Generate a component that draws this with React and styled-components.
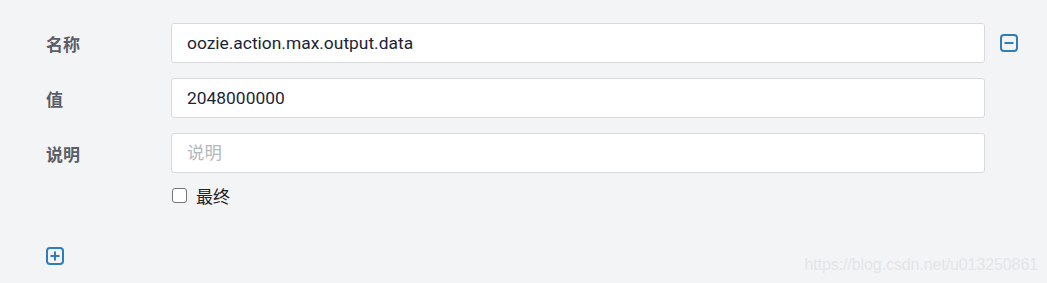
import React from "react";
import styled, { createGlobalStyle } from "styled-components";

const Global = createGlobalStyle`
  html, body { margin: 0; padding: 0; background: #f3f4f6; }
  body { font-family: Roboto, "Noto Sans CJK SC", sans-serif; }
`;

const Page = styled.div`
  position: relative;
  width: 1047px;
  height: 283px;
  box-sizing: border-box;
  padding: 23px 0 0 46px;
  background: #f3f4f6;
`;

const Row = styled.div`
  display: grid;
  grid-template-columns: 125px 814px 34px;
  align-items: center;
  margin-bottom: ${(p) => p.$mb ?? 15}px;
`;

const Label = styled.label`
  font-family: Roboto, "Noto Sans CJK SC", sans-serif;
  font-weight: 700;
  font-size: 17px;
  color: #5a5e66;
`;

const Input = styled.input`
  box-sizing: border-box;
  width: 814px;
  height: 40px;
  border: 1px solid #d9dadc;
  border-radius: 3px;
  background: #fff;
  padding: 0 15px;
  font-family: Roboto, "Noto Sans CJK SC", sans-serif;
  font-size: 17.4px;
  color: #1b2536;
  outline: none;
  &::placeholder { color: #b4b7bc; }
`;

const IconBtn = styled.span`
  display: inline-flex;
  width: 18px;
  height: 18px;
  margin-left: ${(p) => p.$ml ?? 0}px;
`;

const CheckRow = styled.div`
  display: flex;
  align-items: center;
  margin-left: 126px;
  margin-top: 14px;
  height: 17px;
  gap: 9px;
`;

const Box = styled.span`
  box-sizing: border-box;
  width: 15px;
  height: 15px;
  border: 1px solid #767676;
  border-radius: 3px;
  background: #fff;
`;

const CheckLabel = styled.span`
  font-family: "Noto Sans CJK SC", sans-serif;
  font-size: 17px;
  color: #222;
  line-height: 18px;
`;

const AddRow = styled.div`
  margin-top: 43px;
  display: flex;
`;

const Watermark = styled.div`
  position: absolute;
  right: 9px;
  bottom: 9px;
  font-family: "Liberation Sans", Arial, sans-serif;
  font-size: 16px;
  color: #e3e5e8;
  letter-spacing: -0.1px;
`;

const SquareIcon = ({ plus }) => (
  <svg width="18" height="18" viewBox="0 0 18 18">
    <rect x="1" y="1" width="16" height="16" rx="3" fill="none" stroke="#2f7dbd" strokeWidth="2" />
    <line x1="4.5" y1="9" x2="13.5" y2="9" stroke="#2f7dbd" strokeWidth="2" />
    {plus && <line x1="9" y1="4.5" x2="9" y2="13.5" stroke="#2f7dbd" strokeWidth="2" />}
  </svg>
);

export default function App() {
  return (
    <>
      <Global />
      <Page>
        <Row>
          <Label>名称</Label>
          <Input defaultValue="oozie.action.max.output.data" />
          <IconBtn $ml={15}><SquareIcon /></IconBtn>
        </Row>
        <Row>
          <Label>值</Label>
          <Input defaultValue="2048000000" />
        </Row>
        <Row $mb={0}>
          <Label>说明</Label>
          <Input placeholder="说明" />
        </Row>
        <CheckRow>
          <Box />
          <CheckLabel>最终</CheckLabel>
        </CheckRow>
        <AddRow>
          <IconBtn><SquareIcon plus /></IconBtn>
        </AddRow>
        <Watermark>https://blog.csdn.net/u013250861</Watermark>
      </Page>
    </>
  );
}
